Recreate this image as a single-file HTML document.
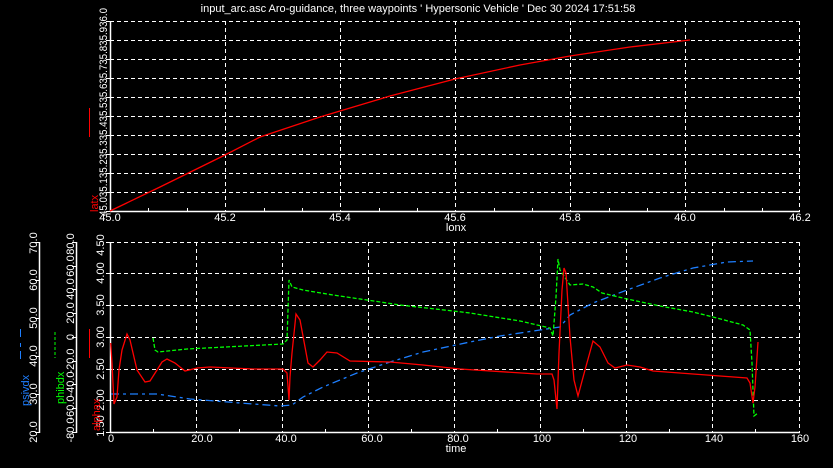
<!DOCTYPE html>
<html><head><meta charset="utf-8"><style>
html,body{margin:0;padding:0;background:#000;}
svg{display:block;}
text{font-family:"Liberation Sans",sans-serif;font-size:11px;fill:#fff;}
</style></head><body>
<svg width="833" height="468" viewBox="0 0 833 468" xmlns="http://www.w3.org/2000/svg">
<rect width="833" height="468" fill="#000"/>
<text x="418" y="12" text-anchor="middle">input_arc.asc Aro-guidance, three waypoints ' Hypersonic Vehicle ' Dec 30 2024 17:51:58</text>

<!-- TOP PLOT -->
<g stroke="#fff" stroke-dasharray="4,3" stroke-width="1" fill="none">
<path d="M110 21.5H800M110 40.5H800M110 59.5H800M110 78.5H800M110 97.5H800M110 116.5H800M110 135.5H800M110 154.5H800M110 173.5H800M110 192.5H800"/>
<path d="M225.5 21V211M340.5 21V211M455.5 21V211M570.5 21V211M685.5 21V211M799.5 21V211"/>
</g>
<g stroke="#fff" stroke-width="1.5" fill="none">
<path d="M110 211.5H800M110.5 21V212"/>
</g>
<g stroke="#fff" stroke-width="1">
<path d="M106 21.5h4M106 40.5h4M106 59.5h4M106 78.5h4M106 97.5h4M106 116.5h4M106 135.5h4M106 154.5h4M106 173.5h4M106 192.5h4M106 211.5h4"/>
<path d="M148.5 211v-3M187.5 211v-3M264.5 211v-3M302.5 211v-3M379.5 211v-3M417.5 211v-3M494.5 211v-3M532.5 211v-3M609.5 211v-3M647.5 211v-3M724.5 211v-3M762.5 211v-3"/>
</g>
<text transform="translate(107,216) rotate(-90)" textLength="208" lengthAdjust="spacingAndGlyphs">45.035.135.235.335.435.535.635.735.835.936.0</text>
<text transform="translate(98,212) rotate(-90)" style="fill:#f00">latx</text>
<path d="M89.5 108V137" stroke="#f00" stroke-width="1"/>
<path d="M110 211 L160 187 L225 155 L260 137 L320 117 L390 96 L455 79 L520 65 L570 56 L630 47 L690 40" stroke="#f00" stroke-width="1.3" fill="none"/>
<g text-anchor="middle">
<text x="110" y="221">45.0</text><text x="225" y="221">45.2</text><text x="340" y="221">45.4</text><text x="455" y="221">45.6</text><text x="570" y="221">45.8</text><text x="685" y="221">46.0</text><text x="800" y="221">46.2</text>
<text x="456" y="231">lonx</text>
</g>

<!-- BOTTOM PLOT -->
<g stroke="#fff" stroke-dasharray="4,3" stroke-width="1" fill="none">
<path d="M110 242.5H800M110 273.5H800M110 305.5H800M110 337.5H800M110 369.5H800M110 400.5H800"/>
<path d="M196.5 242V432M282.5 242V432M368.5 242V432M454.5 242V432M540.5 242V432M626.5 242V432M712.5 242V432M799.5 242V432"/>
</g>
<g stroke="#fff" stroke-width="1.5" fill="none">
<path d="M110 432.5H800M110.5 242V433M39.5 242V433M76.5 242V433"/>
</g>
<g stroke="#fff" stroke-width="1">
<path d="M106 242.5h4M106 273.5h4M106 305.5h4M106 337.5h4M106 369.5h4M106 400.5h4M106 432.5h4"/>
<path d="M35 242.5h4M35 280.5h4M35 318.5h4M35 356.5h4M35 394.5h4M35 432.5h4"/>
<path d="M72 242.5h4M72 266.5h4M72 289.5h4M72 313.5h4M72 337.5h4M72 361.5h4M72 384.5h4M72 408.5h4M72 432.5h4"/>
<path d="M153.5 432v-3M239.5 432v-3M325.5 432v-3M411.5 432v-3M497.5 432v-3M583.5 432v-3M669.5 432v-3M755.5 432v-3"/>
</g>
<g text-anchor="middle">
<text transform="translate(104,426) rotate(-90)">1.50</text>
<text transform="translate(104,400) rotate(-90)">2.00</text>
<text transform="translate(104,369) rotate(-90)">2.50</text>
<text transform="translate(104,337) rotate(-90)">3.00</text>
<text transform="translate(104,305) rotate(-90)">3.50</text>
<text transform="translate(104,273) rotate(-90)">4.00</text>
<text transform="translate(104,245) rotate(-90)">4.50</text>

<text transform="translate(37,432) rotate(-90)">20.0</text>
<text transform="translate(37,394) rotate(-90)">30.0</text>
<text transform="translate(37,356) rotate(-90)">40.0</text>
<text transform="translate(37,318) rotate(-90)">50.0</text>
<text transform="translate(37,280) rotate(-90)">60.0</text>
<text transform="translate(37,243) rotate(-90)">70.0</text>

<text transform="translate(74,430) rotate(-90)">-80.0</text>
<text transform="translate(74,408) rotate(-90)">-60.0</text>
<text transform="translate(74,384) rotate(-90)">-40.0</text>
<text transform="translate(74,361) rotate(-90)">-20.0</text>
<text transform="translate(74,337) rotate(-90)">0</text>
<text transform="translate(74,313) rotate(-90)">20.0</text>
<text transform="translate(74,289) rotate(-90)">40.0</text>
<text transform="translate(74,266) rotate(-90)">60.0</text>
<text transform="translate(74,244) rotate(-90)">80.0</text>
</g>
<text transform="translate(29,406) rotate(-90)" style="fill:#1e7fff">psivdx</text>
<text transform="translate(64,404) rotate(-90)" style="fill:#0f0">phibdx</text>
<text transform="translate(100,431) rotate(-90)" style="fill:#f00">alphax</text>
<path d="M20.5 329v8M20.5 343v4M20.5 351v8" stroke="#1e7fff" stroke-width="1"/>
<path d="M55 332V358" stroke="#0f0" stroke-width="1" stroke-dasharray="3,2"/>
<path d="M89.5 329V358" stroke="#f00" stroke-width="1"/>

<path d="M111 394 L157 394 L190 399 L240 403 L280 406 L292 405 L303 397 L323 387 L357 373 L390 362 L423 352 L470 342 L500 336 L540 330 L560 327 L570 315 L593 303 L627 290 L660 278 L693 268 L727 262 L753 261" stroke="#1e7fff" stroke-width="1.3" fill="none" stroke-dasharray="8,4,3,4"/>
<path d="M153 338 L155 350 L158 352 L187 349 L283 344 L287 340 L289 280 L292 287 L303 290 L333 295 L367 300 L400 305 L453 311 L470 313 L520 321 L550 328 L553 336 L556 297 L558 259 L560 270 L570 285 L583 284 L593 287 L602 293 L627 299 L660 306 L693 312 L713 317 L743 325 L750 330 L752 363 L753 390 L754 416 L758 413" stroke="#0f0" stroke-width="1.3" fill="none" stroke-dasharray="4,2"/>
<path d="M110.7 343 L112 363 L114 404 L117 397 L119 370 L122 350 L127 334 L130 340 L137 370 L145 382 L150 381 L157 370 L162 362 L167 359 L175 363 L185 371 L197 368 L210 367 L253 369 L283 369 L287 373 L289 400 L290 377 L292 353 L296 314 L300 320 L308 363 L313 367 L320 360 L327 352 L337 353 L350 361 L390 362 L423 365 L460 369 L537 374 L552 374 L554 380 L557 409 L559 353 L562 290 L564 268 L566 273 L570 337 L574 380 L578 396 L585 370 L593 341 L600 347 L608 363 L615 368 L627 365 L640 367 L653 371 L693 374 L747 378 L750 383 L753 403 L755 387 L758 342" stroke="#f00" stroke-width="1.3" fill="none"/>

<g text-anchor="middle">
<text x="202" y="442">20.0</text><text x="286" y="442">40.0</text><text x="372" y="442">60.0</text><text x="458" y="442">80.0</text><text x="542" y="442">100</text><text x="628" y="442">120</text><text x="714" y="442">140</text><text x="800" y="442">160</text>
<text x="456" y="452">time</text>
</g>
<text x="108" y="442">0</text>
</svg>
</body></html>
